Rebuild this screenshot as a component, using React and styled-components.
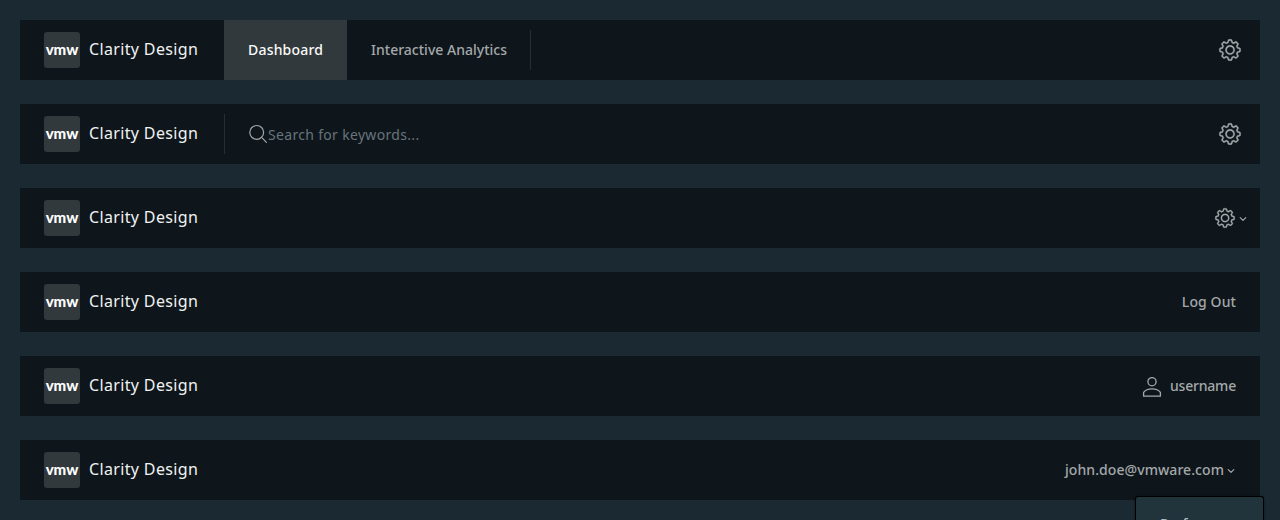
import React from "react";
import styled, { createGlobalStyle } from "styled-components";

const Global = createGlobalStyle`
  *, *::before, *::after { box-sizing: border-box; }
  html, body { margin: 0; height: 100%; overflow: hidden; background: #1b2a32; }
  body { font-family: "Noto Sans", "Open Sans", sans-serif; font-size: 14px; color: #a4a8aa; }
`;

const Page = styled.main`
  display: flex;
  flex-direction: column;
  gap: 24px;
  padding: 20px;
`;

const Header = styled.header`
  display: flex;
  flex: none;
  align-items: stretch;
  height: 60px;
  background: #0e161b;
  white-space: nowrap;
`;

const Brand = styled.a`
  display: flex;
  align-items: center;
  width: 204px;
  padding-left: 24px;
`;

const Logo = styled.span`
  display: flex;
  align-items: center;
  justify-content: center;
  width: 36px;
  height: 36px;
  margin-right: 9px;
  padding-bottom: 2px;
  border-radius: 3px;
  background: #32393c;
  color: #fff;
  font-family: Lato, sans-serif;
  font-size: 15px;
  font-weight: 900;
  line-height: 34px;
`;

const Title = styled.span`
  padding-bottom: 2px;
  color: #f0f2f3;
  font-size: 16px;
  font-weight: 400;
  line-height: 24px;
  letter-spacing: 0.35px;
`;

const Nav = styled.nav`
  display: flex;
`;

const Divider = styled.span`
  align-self: center;
  width: 1px;
  height: 40px;
  background: #262e31;
`;

const NavLink = styled.a`
  display: flex;
  align-items: center;
  width: ${(p) => p.$width}px;
  padding-left: 24px;
  color: ${(p) => (p.$active ? "#fafafa" : "inherit")};
  background: ${(p) => (p.$active ? "#32393c" : "transparent")};
`;

const Label = styled.span`
  font-weight: 500;
  line-height: 24px;
  letter-spacing: ${(p) => p.$spacing || 0}px;
`;

const Search = styled.label`
  display: flex;
  align-items: center;
  padding-left: 23px;
`;

const Placeholder = styled.span`
  padding-top: 2px;
  color: #67747b;
  line-height: 24px;
  letter-spacing: ${(p) => p.$spacing || 0}px;
`;

const Actions = styled.div`
  display: flex;
  align-items: center;
  margin-left: auto;
  padding-right: ${(p) => p.$right}px;
  gap: ${(p) => p.$gap || 0}px;
`;

const Icon = styled.svg`
  display: block;
  flex: none;
  width: ${(p) => p.$size}px;
  height: ${(p) => p.$size}px;
  margin-top: ${(p) => p.$drop || 0}px;
  fill: none;
  stroke: currentColor;
`;

const Menu = styled.div`
  position: absolute;
  top: 496px;
  left: 1135px;
  width: 129px;
  height: 24px;
  padding: 15px 24px 0;
  overflow: hidden;
  border: 1px solid #000;
  border-bottom: 0;
  border-radius: 3px 3px 0 0;
  background: #21333b;
  box-shadow: 0 1px 3px rgba(0, 0, 0, 0.5);
  color: #acbac3;
`;

const Cog = ({ size }) => (
  <Icon $size={size} viewBox="0 0 36 36">
    <g fill="currentColor" strokeWidth="0.4">
      <path d="M18.1,11c-3.9,0-7,3.1-7,7s3.1,7,7,7c3.9,0,7-3.1,7-7S22,11,18.1,11z M18.1,23c-2.8,0-5-2.2-5-5s2.2-5,5-5c2.8,0,5,2.2,5,5S20.9,23,18.1,23z" />
      <path d="M32.8,14.7L30,13.8l-0.6-1.5l1.4-2.6c0.3-0.6,0.2-1.4-0.3-1.9l-2.4-2.4c-0.5-0.5-1.3-0.6-1.9-0.3l-2.6,1.4l-1.5-0.6l-0.9-2.8C21,2.5,20.4,2,19.7,2h-3.4c-0.7,0-1.3,0.5-1.4,1.2L14,6c-0.6,0.1-1.1,0.3-1.6,0.6L9.8,5.2C9.2,4.9,8.4,5,7.9,5.5L5.5,7.9C5,8.4,4.9,9.2,5.2,9.8l1.3,2.5c-0.2,0.5-0.4,1.1-0.6,1.6l-2.8,0.9C2.5,15,2,15.6,2,16.3v3.4c0,0.7,0.5,1.3,1.2,1.5L6,22.1l0.6,1.5l-1.4,2.6c-0.3,0.6-0.2,1.4,0.3,1.9l2.4,2.4c0.5,0.5,1.3,0.6,1.9,0.3l2.6-1.4l1.5,0.6l0.9,2.9c0.2,0.6,0.8,1.1,1.5,1.1h3.4c0.7,0,1.3-0.5,1.5-1.1l0.9-2.9l1.5-0.6l2.6,1.4c0.6,0.3,1.4,0.2,1.9-0.3l2.4-2.4c0.5-0.5,0.6-1.3,0.3-1.9l-1.4-2.6l0.6-1.5l2.9-0.9c0.6-0.2,1.1-0.8,1.1-1.5v-3.4C34,15.6,33.5,14.9,32.8,14.7z M32,19.4l-3.6,1.1L28.3,21c-0.3,0.7-0.6,1.4-0.9,2.1l-0.3,0.5l1.8,3.3l-2,2l-3.3-1.8l-0.5,0.3c-0.7,0.4-1.4,0.7-2.1,0.9l-0.5,0.1L19.4,32h-2.8l-1.1-3.6L15,28.3c-0.7-0.3-1.4-0.6-2.1-0.9l-0.5-0.3l-3.3,1.8l-2-2l1.8-3.3l-0.3-0.5c-0.4-0.7-0.7-1.4-0.9-2.1l-0.1-0.5L4,19.4v-2.8l3.4-1l0.2-0.5c0.2-0.8,0.5-1.5,0.9-2.2l0.3-0.5L7.1,9.1l2-2l3.2,1.8l0.5-0.3c0.7-0.4,1.4-0.7,2.2-0.9l0.5-0.2L16.6,4h2.8l1.1,3.5L21,7.7c0.7,0.2,1.4,0.5,2.1,0.9l0.5,0.3l3.3-1.8l2,2l-1.8,3.3l0.3,0.5c0.4,0.7,0.7,1.4,0.9,2.1l0.1,0.5l3.6,1.1V19.4z" />
    </g>
  </Icon>
);

const Magnifier = () => (
  <Icon $size={20} viewBox="0 0 20 20" strokeWidth="1.2" strokeLinecap="round">
    <circle cx="8.7" cy="8.4" r="6.9" />
    <path d="M14.4 14.2 18.4 18.3" />
  </Icon>
);

const User = () => (
  <Icon $size={20} $drop={1} viewBox="0 0 20 20" strokeWidth="1.3" strokeLinejoin="round">
    <circle cx="10" cy="4.7" r="4.1" />
    <path d="M1.6 19.2V15.4C3.4 12.8 6.4 11.8 10 11.8s6.6 1 8.4 3.6v3.8z" />
  </Icon>
);

const Caret = () => (
  <Icon $size={8} $drop={1} viewBox="0 0 8 8" strokeWidth="1.2" strokeLinecap="round" strokeLinejoin="round">
    <path d="M1.2 2.6 4 5.4 6.8 2.6" />
  </Icon>
);

const AppHeader = ({ children }) => (
  <Header>
    <Brand>
      <Logo>vmw</Logo>
      <Title>Clarity Design</Title>
    </Brand>
    {children}
  </Header>
);

export default function App() {
  return (
    <>
      <Global />
      <Page>
        <AppHeader>
          <Nav>
            <NavLink $active $width={123}>
              <Label $spacing={0.2}>Dashboard</Label>
            </NavLink>
            <NavLink $width={183}>
              <Label $spacing={0.01}>Interactive Analytics</Label>
            </NavLink>
            <Divider />
          </Nav>
          <Actions $right={18}>
            <Cog size={24} />
          </Actions>
        </AppHeader>
        <AppHeader>
          <Divider />
          <Search>
            <Magnifier />
            <Placeholder $spacing={0.32}>Search for keywords...</Placeholder>
          </Search>
          <Actions $right={18}>
            <Cog size={24} />
          </Actions>
        </AppHeader>
        <AppHeader>
          <Actions $right={13} $gap={3}>
            <Cog size={22} />
            <Caret />
          </Actions>
        </AppHeader>
        <AppHeader>
          <Actions $right={24}>
            <Label $spacing={0.1}>Log Out</Label>
          </Actions>
        </AppHeader>
        <AppHeader>
          <Actions $right={24} $gap={8}>
            <User />
            <Label $spacing={-0.2}>username</Label>
          </Actions>
        </AppHeader>
        <AppHeader>
          <Actions $right={25} $gap={3}>
            <Label $spacing={0.07}>john.doe@vmware.com</Label>
            <Caret />
          </Actions>
        </AppHeader>
      </Page>
      <Menu>
        <Label $spacing={0.1}>Preferences</Label>
      </Menu>
    </>
  );
}
